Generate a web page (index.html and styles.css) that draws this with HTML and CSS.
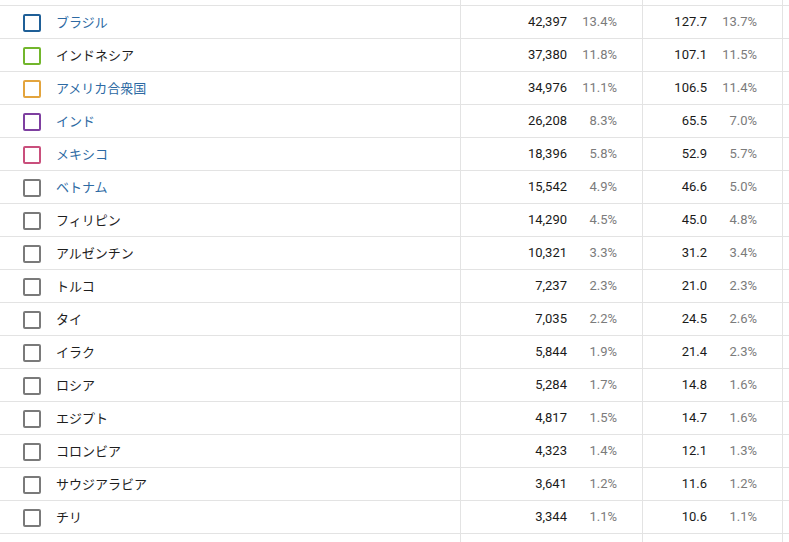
FILE: index.html
```html
<!DOCTYPE html>
<html lang="ja">
<head>
<meta charset="utf-8">
<link rel="stylesheet" href="styles.css">
</head>
<body>
<div class="table">
  <div class="row ghost"><div class="c1"></div><div class="c2"></div><div class="c3"></div><div class="c4"></div></div>

  <div class="row"><div class="c1"><span class="cb blue"></span><span class="name link">ブラジル</span></div><div class="c2"><span class="val">42,397</span><span class="pct">13.4%</span></div><div class="c3"><span class="val">127.7</span><span class="pct">13.7%</span></div><div class="c4"></div></div>
  <div class="row"><div class="c1"><span class="cb green"></span><span class="name">インドネシア</span></div><div class="c2"><span class="val">37,380</span><span class="pct">11.8%</span></div><div class="c3"><span class="val">107.1</span><span class="pct">11.5%</span></div><div class="c4"></div></div>
  <div class="row"><div class="c1"><span class="cb orange"></span><span class="name link">アメリカ合衆国</span></div><div class="c2"><span class="val">34,976</span><span class="pct">11.1%</span></div><div class="c3"><span class="val">106.5</span><span class="pct">11.4%</span></div><div class="c4"></div></div>
  <div class="row"><div class="c1"><span class="cb purple"></span><span class="name link">インド</span></div><div class="c2"><span class="val">26,208</span><span class="pct">8.3%</span></div><div class="c3"><span class="val">65.5</span><span class="pct">7.0%</span></div><div class="c4"></div></div>
  <div class="row"><div class="c1"><span class="cb pink"></span><span class="name link">メキシコ</span></div><div class="c2"><span class="val">18,396</span><span class="pct">5.8%</span></div><div class="c3"><span class="val">52.9</span><span class="pct">5.7%</span></div><div class="c4"></div></div>
  <div class="row"><div class="c1"><span class="cb"></span><span class="name link">ベトナム</span></div><div class="c2"><span class="val">15,542</span><span class="pct">4.9%</span></div><div class="c3"><span class="val">46.6</span><span class="pct">5.0%</span></div><div class="c4"></div></div>
  <div class="row"><div class="c1"><span class="cb"></span><span class="name">フィリピン</span></div><div class="c2"><span class="val">14,290</span><span class="pct">4.5%</span></div><div class="c3"><span class="val">45.0</span><span class="pct">4.8%</span></div><div class="c4"></div></div>
  <div class="row"><div class="c1"><span class="cb"></span><span class="name">アルゼンチン</span></div><div class="c2"><span class="val">10,321</span><span class="pct">3.3%</span></div><div class="c3"><span class="val">31.2</span><span class="pct">3.4%</span></div><div class="c4"></div></div>
  <div class="row"><div class="c1"><span class="cb"></span><span class="name">トルコ</span></div><div class="c2"><span class="val">7,237</span><span class="pct">2.3%</span></div><div class="c3"><span class="val">21.0</span><span class="pct">2.3%</span></div><div class="c4"></div></div>
  <div class="row"><div class="c1"><span class="cb"></span><span class="name">タイ</span></div><div class="c2"><span class="val">7,035</span><span class="pct">2.2%</span></div><div class="c3"><span class="val">24.5</span><span class="pct">2.6%</span></div><div class="c4"></div></div>
  <div class="row"><div class="c1"><span class="cb"></span><span class="name">イラク</span></div><div class="c2"><span class="val">5,844</span><span class="pct">1.9%</span></div><div class="c3"><span class="val">21.4</span><span class="pct">2.3%</span></div><div class="c4"></div></div>
  <div class="row"><div class="c1"><span class="cb"></span><span class="name">ロシア</span></div><div class="c2"><span class="val">5,284</span><span class="pct">1.7%</span></div><div class="c3"><span class="val">14.8</span><span class="pct">1.6%</span></div><div class="c4"></div></div>
  <div class="row"><div class="c1"><span class="cb"></span><span class="name">エジプト</span></div><div class="c2"><span class="val">4,817</span><span class="pct">1.5%</span></div><div class="c3"><span class="val">14.7</span><span class="pct">1.6%</span></div><div class="c4"></div></div>
  <div class="row"><div class="c1"><span class="cb"></span><span class="name">コロンビア</span></div><div class="c2"><span class="val">4,323</span><span class="pct">1.4%</span></div><div class="c3"><span class="val">12.1</span><span class="pct">1.3%</span></div><div class="c4"></div></div>
  <div class="row"><div class="c1"><span class="cb"></span><span class="name">サウジアラビア</span></div><div class="c2"><span class="val">3,641</span><span class="pct">1.2%</span></div><div class="c3"><span class="val">11.6</span><span class="pct">1.2%</span></div><div class="c4"></div></div>
  <div class="row"><div class="c1"><span class="cb"></span><span class="name">チリ</span></div><div class="c2"><span class="val">3,344</span><span class="pct">1.1%</span></div><div class="c3"><span class="val">10.6</span><span class="pct">1.1%</span></div><div class="c4"></div></div>
  <div class="row"><div class="c1"><span class="cb"></span><span class="name"></span></div><div class="c2"></div><div class="c3"></div><div class="c4"></div></div>
</div>
</body>
</html>
```
FILE: styles.css
```css
* { box-sizing: border-box; }
html, body { margin: 0; padding: 0; background: #fff; }
body {
  width: 789px;
  height: 542px;
  overflow: hidden;
  font-family: Roboto, "Noto Sans CJK JP", sans-serif;
  color: #212121;
}
.table { display: flex; flex-direction: column; }
.row {
  display: grid;
  grid-template-columns: 461px 182px 140px 1fr;
  height: 33px;
  border-bottom: 1px solid #e3e3e3;
  flex: none;
}
.row.ghost { height: 6px; }
.c1, .c2, .c3 { border-right: 1px solid #e3e3e3; }
.c1 {
  display: flex;
  align-items: center;
  padding-left: 23px;
  gap: 15px;
}
.cb {
  width: 18px;
  height: 18px;
  border: 2px solid #7a7a7a;
  border-radius: 2px;
  flex: none;
  margin-top: 1px;
}
.cb.blue { border-color: #1f5f97; }
.cb.green { border-color: #72b62c; }
.cb.orange { border-color: #e3a43d; }
.cb.purple { border-color: #7e3fa0; }
.cb.pink { border-color: #c94f7c; }
.name {
  font-family: "Noto Sans CJK JP", sans-serif;
  font-size: 13px;
  color: #1e1e1e;
  line-height: 1;
  margin-top: -2px;
}
.name.link { color: #2d6aa3; }
.c2, .c3 {
  display: flex;
  justify-content: flex-end;
  align-items: center;
  padding-right: 25px;
  font-size: 13px;
  padding-bottom: 1px;
}
.val { color: #1a1a1a; font-weight: 400; }
.pct { width: 50px; text-align: right; color: #7b7b7b; }
```
